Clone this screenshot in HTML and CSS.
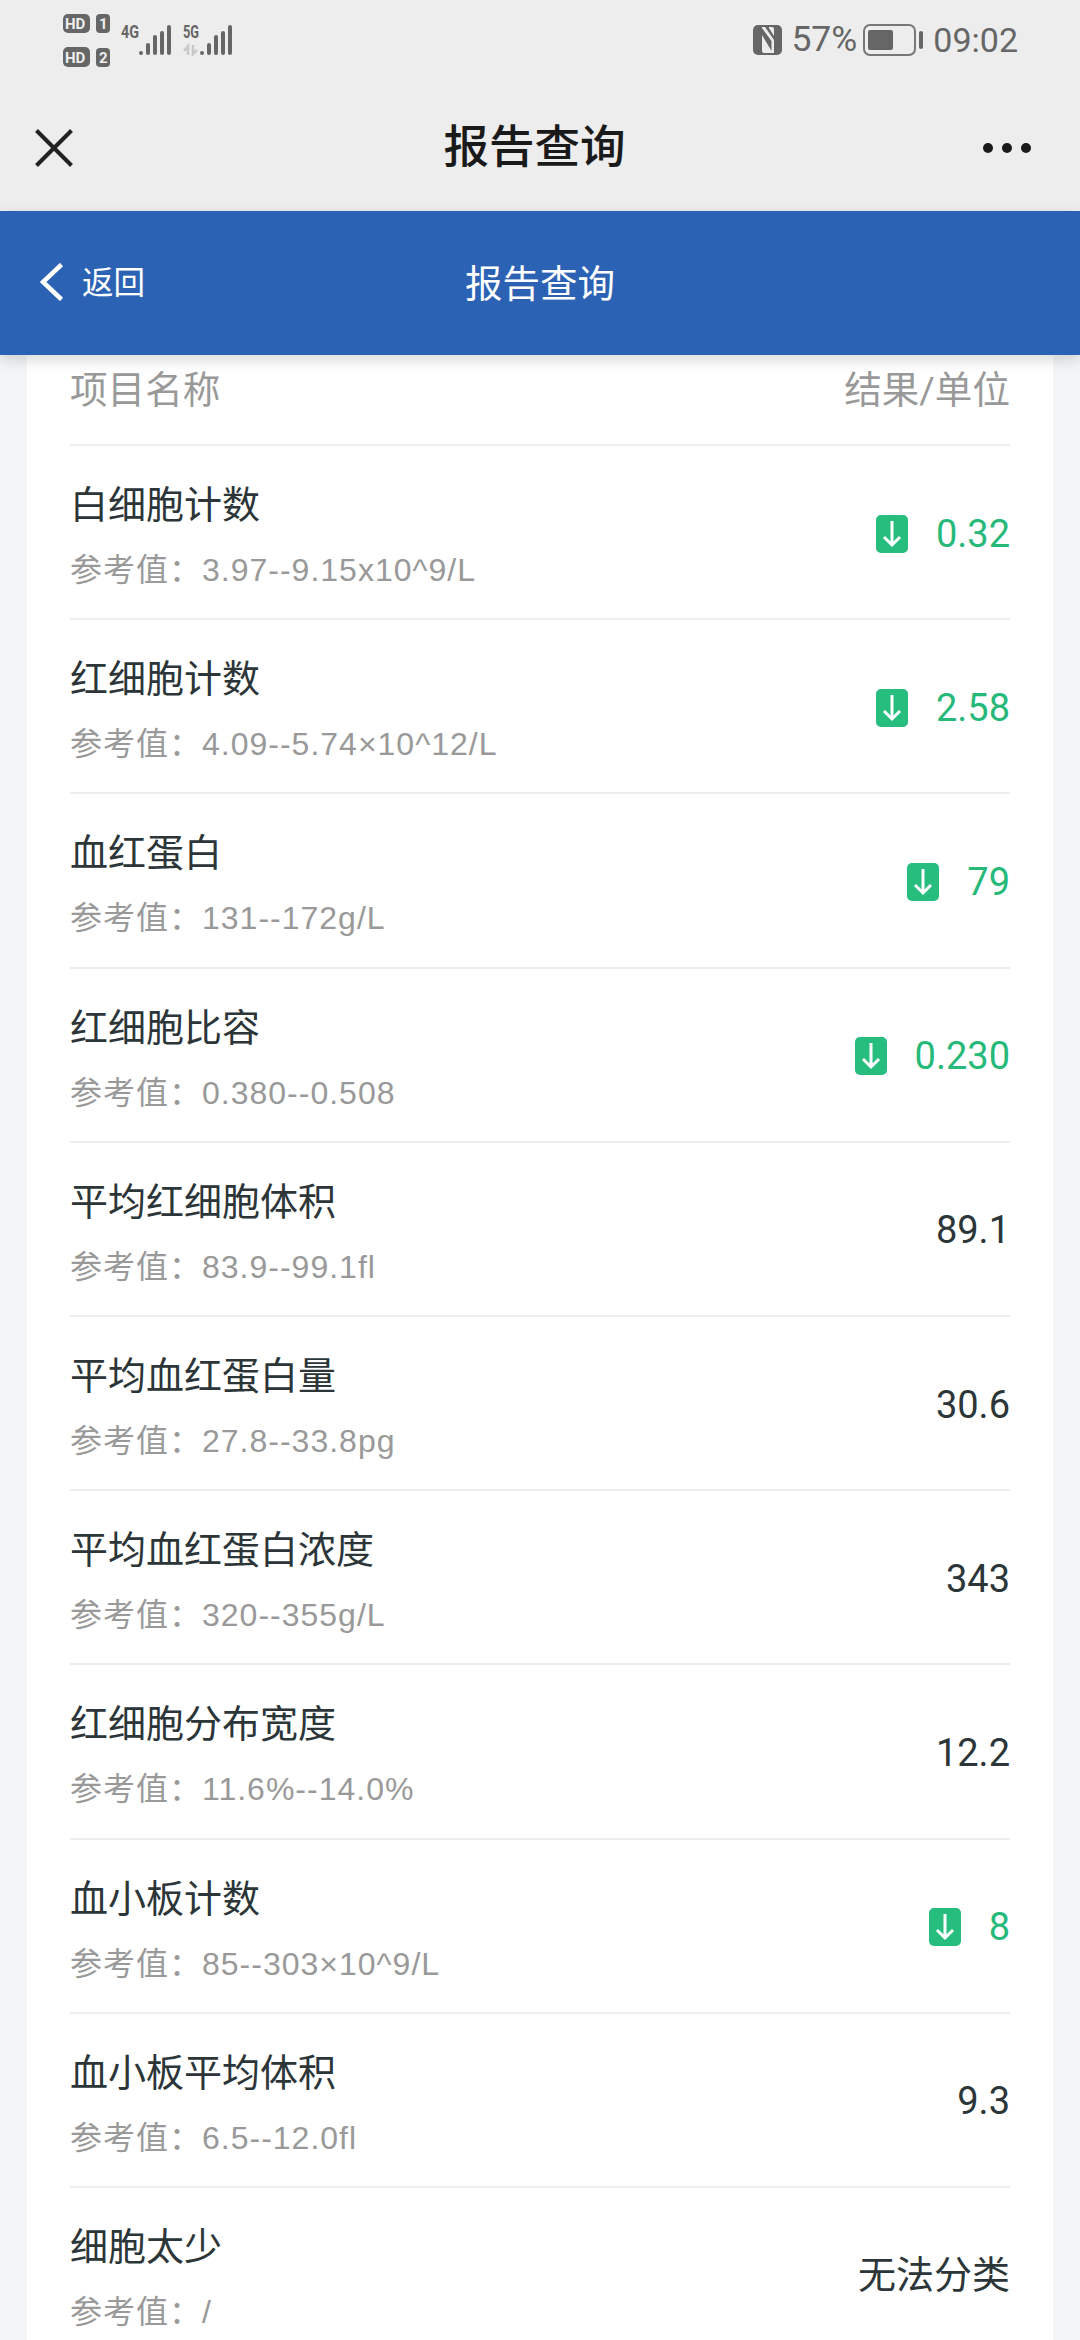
FILE: index.html
```html
<!DOCTYPE html>
<html lang="zh-CN">
<head>
<meta charset="utf-8">
<title>报告查询</title>
<link rel="stylesheet" href="styles.css">
</head>
<body>
<div class="phone">
  <div class="status">
    <svg class="status-left" width="180" height="60" viewBox="63 10 180 60">
      <g fill="#666">
        <rect x="63" y="14" width="27" height="19" rx="5"/>
        <rect x="96" y="14" width="14" height="19" rx="4"/>
        <rect x="63" y="47" width="27" height="20" rx="5"/>
        <rect x="96" y="48" width="14" height="19" rx="4"/>
        <circle cx="141" cy="53" r="2"/>
        <rect x="146" y="43" width="4" height="12" rx="2"/>
        <rect x="153" y="35" width="4" height="20" rx="2"/>
        <rect x="160" y="31" width="4" height="24" rx="2"/>
        <rect x="167" y="25" width="4" height="30" rx="2"/>
        <circle cx="202" cy="53" r="2"/>
        <rect x="207" y="43" width="4" height="12" rx="2"/>
        <rect x="214" y="35" width="4" height="20" rx="2"/>
        <rect x="221" y="31" width="4" height="24" rx="2"/>
        <rect x="228" y="25" width="4" height="30" rx="2"/>
      </g>
      <g class="sb-small" fill="#eee">
        <text x="65" y="29">HD</text>
        <text x="99" y="29">1</text>
        <text x="65" y="63">HD</text>
        <text x="99" y="63">2</text>
      </g>
      <g class="sb-net" fill="#666">
        <text x="121" y="38" textLength="18" lengthAdjust="spacingAndGlyphs">4G</text>
        <text x="183" y="38" textLength="16" lengthAdjust="spacingAndGlyphs">5G</text>
      </g>
      <path d="M188 55V46l-4 5M193 45v9l4-4" fill="none" stroke="#c8c8c8" stroke-width="2.5"/>
    </svg>
    <div class="status-right">
      <svg width="29" height="30" viewBox="0 0 29 30">
        <rect width="29" height="30" rx="5" fill="#666"/>
        <path fill="#ededed" d="M9 2h3l9 13v13h-2.500V16L9 3zM9 10l9.500 16v2h-7.500a2 2 0 0 1-2-2z"/>
        <path fill="#ededed" d="M16 2h3a2 2 0 0 1 2 2v7l-5-8z"/>
      </svg>
      <span class="pct">57%</span>
      <svg class="batt" width="60" height="32" viewBox="0 0 60 32">
        <rect x="1" y="1" width="51" height="30" rx="6" fill="none" stroke="#777" stroke-width="2"/>
        <rect x="5" y="6" width="25" height="20" rx="2" fill="#666"/>
        <rect x="56" y="7" width="4" height="18" rx="2" fill="#666"/>
      </svg>
      <span class="time">09:02</span>
    </div>
  </div>

  <div class="wxbar">
    <svg class="wx-close" width="38" height="38" viewBox="0 0 38 38">
      <path d="M1.500 1.500l35 35M36.500 1.500l-35 35" stroke="#222" stroke-width="4" fill="none"/>
    </svg>
    <div class="wx-title">报告查询</div>
    <svg class="wx-more" width="48" height="10" viewBox="0 0 48 10">
      <circle cx="5" cy="5" r="5"/><circle cx="24" cy="5" r="5"/><circle cx="43" cy="5" r="5"/>
    </svg>
  </div>

  <header class="appbar">
    <div class="back">
      <svg width="24" height="38" viewBox="0 0 24 38">
        <path d="M21.500 1.500L3 19l18.500 17.500" stroke="#fff" stroke-width="4.500" fill="none"/>
      </svg>
      <span>返回</span>
    </div>
    <div class="app-title">报告查询</div>
  </header>

  <main class="content">
    <section class="card">
      <div class="thead"><span>项目名称</span><span>结果/单位</span></div>

      <div class="row"><div class="info"><div class="name">白细胞计数</div><div class="ref">参考值：3.97--9.15x10^9/L</div></div>
        <div class="val low"><svg class="badge" viewBox="0 0 32 38"><rect width="32" height="38" rx="5"/><path d="M16 6v24M8 22l8 8 8-8"/></svg><span>0.32</span></div></div>

      <div class="row"><div class="info"><div class="name">红细胞计数</div><div class="ref">参考值：4.09--5.74×10^12/L</div></div>
        <div class="val low"><svg class="badge" viewBox="0 0 32 38"><rect width="32" height="38" rx="5"/><path d="M16 6v24M8 22l8 8 8-8"/></svg><span>2.58</span></div></div>

      <div class="row"><div class="info"><div class="name">血红蛋白</div><div class="ref">参考值：131--172g/L</div></div>
        <div class="val low"><svg class="badge" viewBox="0 0 32 38"><rect width="32" height="38" rx="5"/><path d="M16 6v24M8 22l8 8 8-8"/></svg><span>79</span></div></div>

      <div class="row"><div class="info"><div class="name">红细胞比容</div><div class="ref">参考值：0.380--0.508</div></div>
        <div class="val low"><svg class="badge" viewBox="0 0 32 38"><rect width="32" height="38" rx="5"/><path d="M16 6v24M8 22l8 8 8-8"/></svg><span>0.230</span></div></div>

      <div class="row"><div class="info"><div class="name">平均红细胞体积</div><div class="ref">参考值：83.9--99.1fl</div></div>
        <div class="val"><span>89.1</span></div></div>

      <div class="row"><div class="info"><div class="name">平均血红蛋白量</div><div class="ref">参考值：27.8--33.8pg</div></div>
        <div class="val"><span>30.6</span></div></div>

      <div class="row"><div class="info"><div class="name">平均血红蛋白浓度</div><div class="ref">参考值：320--355g/L</div></div>
        <div class="val"><span>343</span></div></div>

      <div class="row"><div class="info"><div class="name">红细胞分布宽度</div><div class="ref">参考值：11.6%--14.0%</div></div>
        <div class="val"><span>12.2</span></div></div>

      <div class="row"><div class="info"><div class="name">血小板计数</div><div class="ref">参考值：85--303×10^9/L</div></div>
        <div class="val low"><svg class="badge" viewBox="0 0 32 38"><rect width="32" height="38" rx="5"/><path d="M16 6v24M8 22l8 8 8-8"/></svg><span>8</span></div></div>

      <div class="row"><div class="info"><div class="name">血小板平均体积</div><div class="ref">参考值：6.5--12.0fl</div></div>
        <div class="val"><span>9.3</span></div></div>

      <div class="row"><div class="info"><div class="name">细胞太少</div><div class="ref">参考值：/</div></div>
        <div class="val"><span>无法分类</span></div></div>
    </section>
  </main>
</div>
</body>
</html>
```
FILE: styles.css
```css
* { box-sizing: border-box; }
html, body { margin: 0; padding: 0; }
body {
  font-family: "Roboto", "Noto Sans CJK SC", sans-serif;
  background: #f4f5f7;
}
.phone {
  width: 1080px;
  height: 2340px;
  overflow: hidden;
  display: flex;
  flex-direction: column;
}

/* status bar */
.status {
  height: 80px;
  flex: none;
  background: #ededed;
  display: flex;
  justify-content: space-between;
  padding: 10px 62px 0 63px;
}
.status-left { display: block; }
.sb-small { font: 700 15px "Roboto", sans-serif; }
.sb-net { font: 700 19px "Roboto", sans-serif; }
.status-right {
  display: flex;
  align-items: center;
  height: 60px;
  color: #666;
  font: 400 34px/1 "Roboto", sans-serif;
}
.pct { margin-left: 9px; font-size: 35.500px; }
.batt { margin-left: 6px; }
.time { margin-left: 10px; }

/* wechat bar */
.wxbar {
  height: 131px;
  flex: none;
  background: #ededed;
  display: flex;
  align-items: center;
  justify-content: space-between;
  padding: 0 49px 0 35px;
}
.wx-close { margin-top: 4px; }
.wx-more { fill: #1a1a1a; margin-top: 4px; }
.wx-title {
  font-size: 45.500px;
  font-weight: 500;
  color: #1a1a1a;
  line-height: 60px;
  margin: 4px 0 0 13px;
}

/* blue header */
.appbar {
  height: 144px;
  flex: none;
  background: #2b62b4;
  color: #fff;
  position: relative;
  z-index: 2;
  display: flex;
  align-items: center;
  justify-content: center;
  box-shadow: 0 5px 14px rgba(0, 0, 0, .15);
}
.back {
  position: absolute;
  left: 40px;
  top: 52px;
  display: flex;
  align-items: center;
  gap: 18px;
  font-size: 31.500px;
  line-height: 38px;
}
.back span { position: relative; top: 2px; }
.back svg { display: block; }
.app-title {
  font-size: 37.500px;
  line-height: 50px;
  margin-top: 2px;
}

/* card */
.content {
  flex: none;
  padding: 0 27px;
}
.card {
  background: #fff;
  padding: 0 43px;
}
.thead {
  height: 91px;
  display: flex;
  justify-content: space-between;
  align-items: center;
  padding-bottom: 27px;
  border-bottom: 2px solid #eee;
  font-size: 37.600px;
  color: #999;
}
.row {
  height: 174.2px;
  display: flex;
  justify-content: space-between;
  align-items: center;
  border-bottom: 2px solid #eee;
}
.info {
  display: flex;
  flex-direction: column;
  gap: 18px;
  padding-top: 8px;
}
.name {
  font-size: 38px;
  line-height: 50px;
  color: #2c3538;
}
.ref {
  font-family: "Liberation Sans", "Noto Sans CJK SC", sans-serif;
  font-size: 32px;
  letter-spacing: 1px;
  line-height: 44px;
  color: #999;
}
.val {
  display: flex;
  align-items: center;
  gap: 28px;
  font-size: 38px;
  line-height: 50px;
  color: #2c3538;
  padding-top: 3px;
}
.val.low { color: #26b97a; }
.badge { width: 32px; height: 38px; display: block; }
.badge rect { fill: #26bd7e; }
.badge path { fill: none; stroke: #fff; stroke-width: 3; }
```
